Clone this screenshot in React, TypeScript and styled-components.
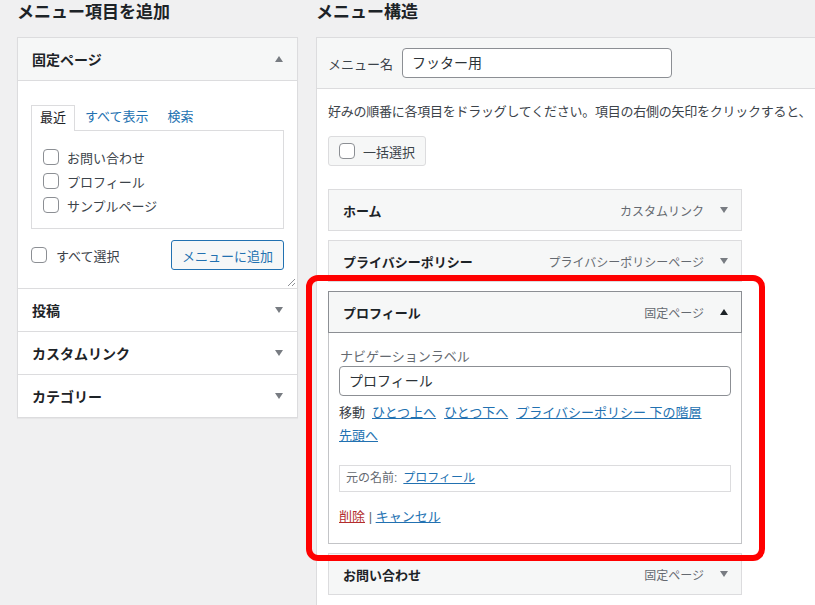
import styled, { createGlobalStyle, css } from "styled-components";

const GlobalStyle = createGlobalStyle`
  html, body {
    margin: 0;
    padding: 0;
    background: #f0f0f1;
    overflow: hidden;
  }
  body {
    font-family: "Liberation Sans", "Noto Sans CJK JP", sans-serif;
    font-size: 13px;
    color: #3c434a;
  }
  * {
    box-sizing: border-box;
  }
`;

const pageItems = ["お問い合わせ", "プロフィール", "サンプルページ"];
const closedSections = ["投稿", "カスタムリンク", "カテゴリー"];

const Page = styled.div`
  display: flex;
  gap: 18px;
  padding-left: 17px;
  width: 1300px;
`;

const Column = styled.div<{ $width: number }>`
  flex: none;
  width: ${(p) => p.$width}px;
`;

const Heading = styled.h2`
  margin: 0 0 12px;
  font-size: 17px;
  line-height: 25px;
  font-weight: 700;
  color: #1d2327;
`;

const Panel = styled.div`
  background: #fff;
  border: 1px solid #dcdcde;
  box-shadow: 0 1px 1px rgba(0, 0, 0, 0.04);
`;

const SectionHeader = styled.div<{ $open?: boolean }>`
  display: flex;
  align-items: center;
  justify-content: space-between;
  height: 43px;
  padding: 0 14px;
  font-size: 14px;
  font-weight: 700;
  color: #1d2327;
  background: ${(p) => (p.$open ? "#f6f7f7" : "#fff")};
  border-bottom: 1px solid #dcdcde;
  &:last-child {
    border-bottom: none;
    height: 42px;
  }
`;

const Arrow = styled.span<{ $up?: boolean; $dark?: boolean }>`
  flex: none;
  width: 0;
  height: 0;
  border-left: 4px solid transparent;
  border-right: 4px solid transparent;
  ${(p) =>
    p.$up
      ? css`
          border-bottom: 6px solid ${p.$dark ? "#1d2327" : "#787c82"};
        `
      : css`
          border-top: 6px solid ${p.$dark ? "#1d2327" : "#787c82"};
        `}
`;

const SectionBody = styled.div`
  position: relative;
  padding: 24px 13px 18px;
  border-bottom: 1px solid #dcdcde;
`;

const TabList = styled.div`
  display: flex;
  height: 25px;
`;

const Tab = styled.span<{ $active?: boolean }>`
  position: relative;
  z-index: 1;
  padding: 0 9px;
  line-height: 24px;
  color: #2271b1;
  & + & {
    margin-left: 1px;
  }
  ${(p) =>
    p.$active &&
    css`
      height: 26px;
      padding: 0 8px;
      color: #1d2327;
      background: #fff;
      border: 1px solid #dcdcde;
      border-bottom: none;
    `}
`;

const TabPanel = styled.div`
  border: 1px solid #dcdcde;
  padding: 14px 11px 11px;
`;

const CheckRow = styled.label`
  display: flex;
  align-items: center;
  gap: 8px;
  height: 24px;
  color: #3c434a;
`;

const Checkbox = styled.span`
  flex: none;
  width: 16px;
  height: 16px;
  border: 1px solid #8c8f94;
  border-radius: 4px;
  background: #fff;
`;

const Footer = styled.div`
  display: flex;
  align-items: center;
  justify-content: space-between;
  margin-top: 11px;
`;

const SelectAll = styled(CheckRow)`
  gap: 9px;
`;

const SecondaryButton = styled.button`
  height: 30px;
  padding: 0 10px;
  font: inherit;
  font-size: 13px;
  color: #2271b1;
  background: #f6f7f7;
  border: 1px solid #2271b1;
  border-radius: 3px;
`;

const ResizeHandle = styled.svg`
  position: absolute;
  right: 1px;
  bottom: 1px;
`;

const StructurePanel = styled.div`
  background: #fff;
  border: 1px solid #dcdcde;
  border-right: none;
  min-height: 600px;
`;

const NameBar = styled.div`
  display: flex;
  align-items: center;
  gap: 9px;
  height: 51px;
  padding: 0 11px;
  background: #f6f7f7;
  border-bottom: 1px solid #dcdcde;
`;

const TextInput = styled.div<{ $width?: number }>`
  width: ${(p) => (p.$width ? `${p.$width}px` : "100%")};
  height: 30px;
  padding: 0 9px;
  font-size: 14px;
  line-height: 28px;
  color: #2c3338;
  background: #fff;
  border: 1px solid #8c8f94;
  border-radius: 4px;
`;

const StructureBody = styled.div`
  padding: 13px 11px 0;
`;

const Instruction = styled.p`
  margin: 0;
  line-height: 20px;
  letter-spacing: -0.25px;
  white-space: nowrap;
`;

const BulkButton = styled.div`
  display: inline-flex;
  align-items: center;
  gap: 8px;
  height: 30px;
  margin-top: 14px;
  padding: 0 10px;
  background: #f6f7f7;
  border: 1px solid #dcdcde;
  border-radius: 3px;
`;

const MenuList = styled.div`
  display: flex;
  flex-direction: column;
  gap: 9px;
  width: 414px;
  margin-top: 23px;
`;

const ItemHeader = styled.div<{ $active?: boolean }>`
  display: flex;
  align-items: center;
  height: 42px;
  padding: 0 13px 0 14px;
  background: #f6f7f7;
  border: 1px solid ${(p) => (p.$active ? "#8c8f94" : "#dcdcde")};
`;

const ItemTitle = styled.span`
  flex: 1;
  font-size: 13px;
  font-weight: 700;
  color: #1d2327;
`;

const ItemType = styled.span`
  margin-right: 16px;
  font-size: 12px;
  color: #646970;
`;

const Highlight = styled.div`
  position: relative;
  &::after {
    content: "";
    position: absolute;
    top: -16px;
    left: -22px;
    right: -23px;
    bottom: -17px;
    border: 6px solid #ff0000;
    border-radius: 12px;
    pointer-events: none;
    z-index: 2;
  }
`;

const ItemBody = styled.div`
  padding: 15px 10px 16px;
  border: 1px solid #c3c4c7;
  border-top: none;
`;

const FieldLabel = styled.div`
  padding-left: 1px;
  line-height: 18px;
  color: #646970;
`;

const MoveRow = styled.div`
  display: flex;
  flex-wrap: wrap;
  column-gap: 8px;
  margin-top: 5px;
  line-height: 23px;
  span:first-child {
    margin-right: -1px;
  }
`;

const Link = styled.a<{ $danger?: boolean }>`
  color: ${(p) => (p.$danger ? "#b32d2e" : "#2271b1")};
  text-decoration: underline;
`;

const OriginalBox = styled.div`
  height: 27px;
  margin-top: 18px;
  padding: 0 6px;
  font-size: 12px;
  line-height: 25px;
  color: #646970;
  border: 1px solid #dcdcde;
  ${Link} {
    margin-left: 6px;
  }
`;

const Actions = styled.div`
  margin-top: 15px;
  line-height: 20px;
  color: #646970;
`;

const MenuItem = ({ title, type }: { title: string; type: string }) => (
  <ItemHeader>
    <ItemTitle>{title}</ItemTitle>
    <ItemType>{type}</ItemType>
    <Arrow />
  </ItemHeader>
);

export default function App() {
  return (
    <>
      <GlobalStyle />
      <Page>
        <Column $width={281}>
          <Heading>メニュー項目を追加</Heading>
          <Panel>
            <SectionHeader $open>
              固定ページ
              <Arrow $up />
            </SectionHeader>
            <SectionBody>
              <TabList>
                <Tab $active>最近</Tab>
                <Tab>すべて表示</Tab>
                <Tab>検索</Tab>
              </TabList>
              <TabPanel>
                {pageItems.map((item) => (
                  <CheckRow key={item}>
                    <Checkbox />
                    {item}
                  </CheckRow>
                ))}
              </TabPanel>
              <Footer>
                <SelectAll>
                  <Checkbox />
                  すべて選択
                </SelectAll>
                <SecondaryButton>メニューに追加</SecondaryButton>
              </Footer>
              <ResizeHandle width="9" height="9" viewBox="0 0 9 9">
                <path d="M1 8 L8 1 M5 8 L8 5" stroke="#8c8f94" strokeWidth="1" fill="none" />
              </ResizeHandle>
            </SectionBody>
            {closedSections.map((s) => (
              <SectionHeader key={s}>
                {s}
                <Arrow />
              </SectionHeader>
            ))}
          </Panel>
        </Column>

        <Column $width={900}>
          <Heading>メニュー構造</Heading>
          <StructurePanel>
            <NameBar>
              <span>メニュー名</span>
              <TextInput $width={270}>フッター用</TextInput>
            </NameBar>
            <StructureBody>
              <Instruction>
                好みの順番に各項目をドラッグしてください。項目の右側の矢印をクリックすると、
              </Instruction>
              <BulkButton>
                <Checkbox />
                一括選択
              </BulkButton>
              <MenuList>
                <MenuItem title="ホーム" type="カスタムリンク" />
                <MenuItem title="プライバシーポリシー" type="プライバシーポリシーページ" />
                <Highlight>
                  <ItemHeader $active>
                    <ItemTitle>プロフィール</ItemTitle>
                    <ItemType>固定ページ</ItemType>
                    <Arrow $up $dark />
                  </ItemHeader>
                  <ItemBody>
                    <FieldLabel>ナビゲーションラベル</FieldLabel>
                    <TextInput>プロフィール</TextInput>
                    <MoveRow>
                      <span>移動</span>
                      <Link>ひとつ上へ</Link>
                      <Link>ひとつ下へ</Link>
                      <Link>プライバシーポリシー 下の階層</Link>
                      <Link>先頭へ</Link>
                    </MoveRow>
                    <OriginalBox>
                      元の名前:<Link>プロフィール</Link>
                    </OriginalBox>
                    <Actions>
                      <Link $danger>削除</Link> | <Link>キャンセル</Link>
                    </Actions>
                  </ItemBody>
                </Highlight>
                <MenuItem title="お問い合わせ" type="固定ページ" />
              </MenuList>
            </StructureBody>
          </StructurePanel>
        </Column>
      </Page>
    </>
  );
}
